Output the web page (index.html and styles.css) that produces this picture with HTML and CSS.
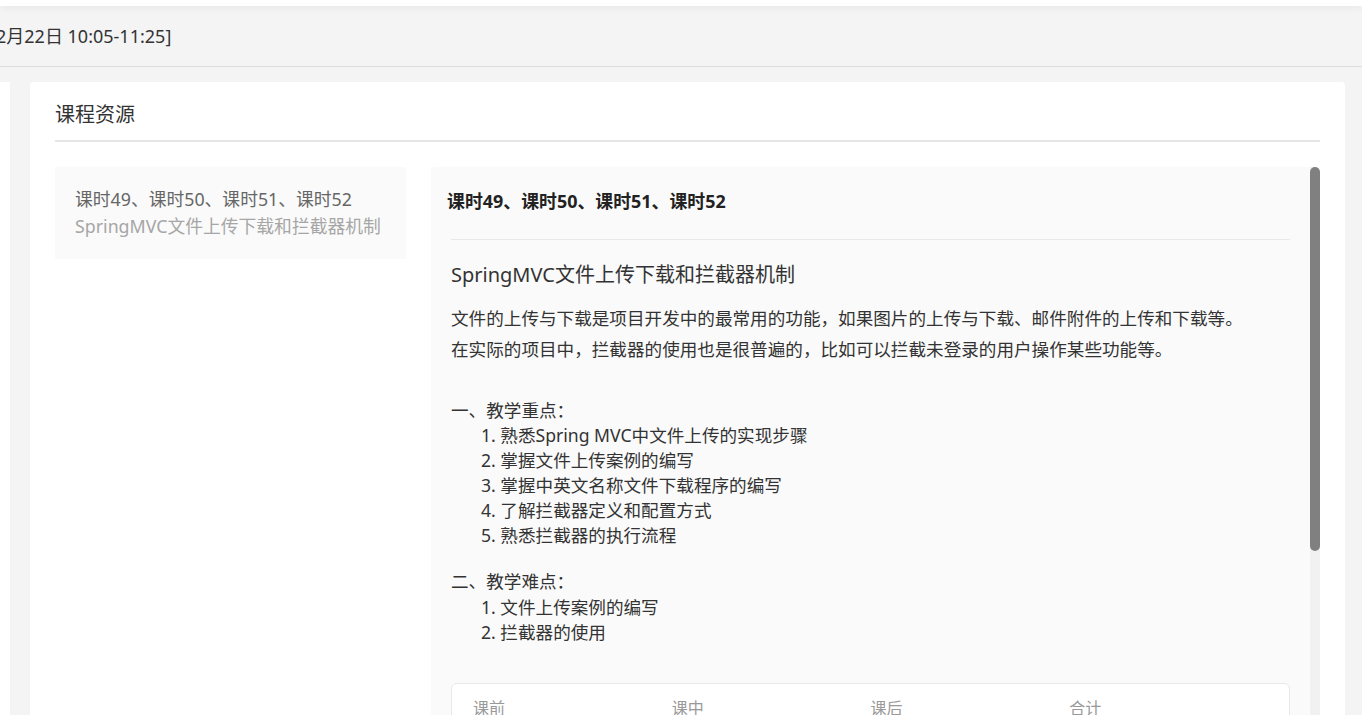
FILE: index.html
```html
<!DOCTYPE html>
<html lang="zh-CN">
<head>
<meta charset="utf-8">
<title>课程资源</title>
<link rel="stylesheet" href="styles.css">
</head>
<body>
<div class="topbar"></div>
<div class="header"><span class="header-text">2月22日 10:05-11:25]</span></div>
<div class="main">
  <div class="side-stub"></div>
  <div class="card">
    <div class="card-title">课程资源</div>
    <div class="card-body">
      <div class="lesson-list">
        <div class="lesson-item">
          <div class="lesson-no">课时49、课时50、课时51、课时52</div>
          <div class="lesson-name">SpringMVC文件上传下载和拦截器机制</div>
        </div>
      </div>
      <div class="detail">
        <div class="detail-inner">
          <div class="detail-head">课时49、课时50、课时51、课时52</div>
          <div class="detail-content">
            <div class="detail-title">SpringMVC文件上传下载和拦截器机制</div>
            <div class="intro">
              <div>文件的上传与下载是项目开发中的最常用的功能，如果图片的上传与下载、邮件附件的上传和下载等。</div>
              <div>在实际的项目中，拦截器的使用也是很普遍的，比如可以拦截未登录的用户操作某些功能等。</div>
            </div>
            <div class="section">
              <div class="sec-title">一、教学重点：</div>
              <div class="sec-item">1. 熟悉Spring MVC中文件上传的实现步骤</div>
              <div class="sec-item">2. 掌握文件上传案例的编写</div>
              <div class="sec-item">3. 掌握中英文名称文件下载程序的编写</div>
              <div class="sec-item">4. 了解拦截器定义和配置方式</div>
              <div class="sec-item">5. 熟悉拦截器的执行流程</div>
            </div>
            <div class="section section-2">
              <div class="sec-title">二、教学难点：</div>
              <div class="sec-item">1. 文件上传案例的编写</div>
              <div class="sec-item">2. 拦截器的使用</div>
            </div>
            <div class="stats">
              <div class="stats-head">
                <span>课前</span><span>课中</span><span>课后</span><span>合计</span>
              </div>
              <div class="stats-row">
                <span>0</span><span>0</span><span>0</span><span>0</span>
              </div>
            </div>
          </div>
        </div>
        <div class="scroll-track"><div class="scroll-thumb"></div></div>
      </div>
    </div>
  </div>
</div>
</body>
</html>
```
FILE: styles.css
```css
html, body {
  margin: 0;
  padding: 0;
}
body {
  background: #f4f4f4;
  font-family: "Noto Sans", "Noto Sans CJK SC", sans-serif;
  color: #333;
  overflow: hidden;
  height: 715px;
}
.topbar {
  height: 6px;
  background: #fff;
  box-shadow: 0 1px 8px rgba(0, 0, 0, 0.07);
  position: relative;
  z-index: 2;
}
.header {
  height: 60px;
  line-height: 60px;
  border-bottom: 1px solid #dddddd;
  font-size: 18px;
  color: #333;
  white-space: nowrap;
  overflow: hidden;
}
.header-text {
  display: inline-block;
  margin-left: -4px;
}
.main {
  display: flex;
  margin-top: 15px;
  gap: 20px;
}
.side-stub {
  width: 10px;
  flex: none;
  background: #fff;
  height: 700px;
}
.card {
  width: 1315px;
  flex: none;
  background: #fff;
  border-radius: 4px;
  padding: 0 25px;
  box-sizing: border-box;
  height: 800px;
}
.card-title {
  padding-top: 18px;
  padding-bottom: 10px;
  line-height: 30px;
  font-size: 20px;
  color: #333;
  border-bottom: 2px solid #e6e6e6;
}
.card-body {
  display: flex;
  gap: 25px;
  margin-top: 25px;
}
.lesson-list {
  width: 351px;
  flex: none;
}
.lesson-item {
  background: #fafafa;
  padding: 19px 20px 19px;
  font-size: 17.8px;
  line-height: 27px;
  border-radius: 2px;
}
.lesson-no {
  color: #666;
}
.lesson-name {
  color: #a6a6a6;
}
.detail {
  flex: 1;
  display: flex;
  background: #fafafa;
  border-radius: 4px 4px 0 0;
  height: 600px;
  overflow: hidden;
}
.detail-inner {
  flex: 1;
  min-width: 0;
}
.scroll-track {
  width: 10px;
  flex: none;
  background: #f1f1f1;
}
.scroll-thumb {
  height: 384px;
  background: #808080;
  border-radius: 5px;
}
.detail-head {
  padding: 21px 16px 0;
  line-height: 26px;
  font-size: 17.9px;
  font-weight: bold;
  color: #222;
}
.detail-content {
  margin: 25px 20px 0;
  border-top: 1px solid #e8e8e8;
}
.detail-title {
  margin-top: 20px;
  line-height: 30px;
  font-size: 20px;
  color: #333;
}
.intro {
  margin-top: 13px;
  font-size: 17.6px;
  line-height: 31px;
}
.section {
  margin-top: 32px;
  font-size: 17.6px;
  line-height: 25px;
}
.sec-title {
  line-height: 26px;
}
.section-2 {
  margin-top: 19px;
}
.section-2 .sec-title {
  line-height: 28px;
}
.sec-item {
  padding-left: 30px;
}
.stats {
  margin-top: 38px;
  background: #fff;
  border: 1px solid #e8e8e8;
  border-radius: 6px;
  padding: 13px 21px 14px;
}
.stats-head,
.stats-row {
  display: grid;
  grid-template-columns: repeat(4, 1fr);
  line-height: 22px;
}
.stats-head {
  font-size: 16px;
  color: #999;
}
.stats-row {
  margin-top: 8px;
  font-size: 20px;
  color: #333;
}
```
